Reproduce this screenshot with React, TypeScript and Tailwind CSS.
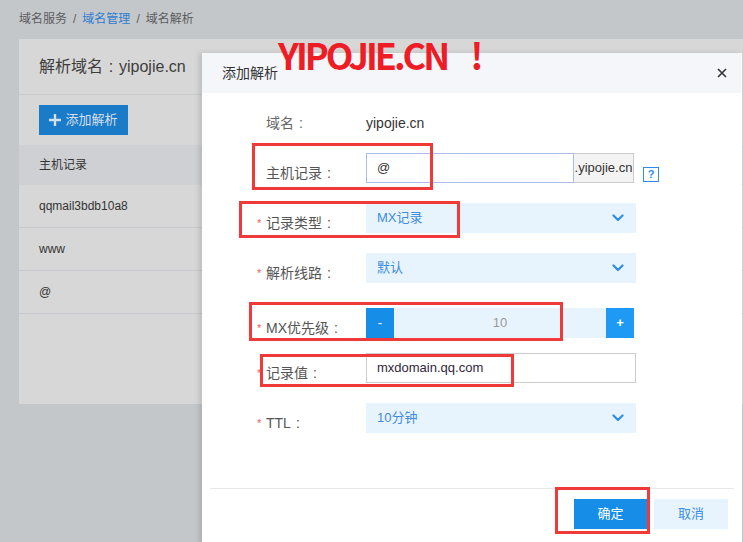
import type { ReactNode } from "react";

const font = "font-['Liberation_Sans','Noto_Sans_CJK_SC',sans-serif]";

function Chevron() {
  return (
    <svg width="12" height="8" viewBox="0 0 12 8" fill="none">
      <path d="M1.5 1.5 6 6l4.5-4.5" stroke="#2f8de4" strokeWidth="2.2" strokeLinecap="round" strokeLinejoin="round" />
    </svg>
  );
}

// full-width colon drawn centred in its box, as the reference font does
function Colon() {
  return <span className="inline-block w-[14px] text-center">:</span>;
}

function Label({ text, required = true }: { text: string; required?: boolean }) {
  return (
    <div className="flex w-[109px] shrink-0 items-center pt-[10px] text-[14px] text-[#555]">
      <span className="w-[9px] text-[11px] text-[#f25a5a]">{required ? "*" : ""}</span>
      <span>{text}</span>
      <Colon />
    </div>
  );
}

function Row({ children, className }: { children: ReactNode; className: string }) {
  return <div className={`flex h-[30px] items-center pl-[55px] ${className}`}>{children}</div>;
}

function Select({ value }: { value: string }) {
  return (
    <div className="flex h-[30px] w-[270px] items-center justify-between bg-[#e8f4fd] pl-[11px] pr-[12px] text-[13px] text-[#3f8cde]">
      <span>{value}</span>
      <Chevron />
    </div>
  );
}

function RedBox({ className }: { className: string }) {
  return <div className={`absolute border-[3px] border-[#f03a3a] ${className}`} />;
}

export default function App() {
  return (
    <div className={`relative h-[542px] w-[743px] overflow-hidden bg-[#c4c7ca] ${font}`}>
      {/* breadcrumb */}
      <div className="flex h-[39px] items-start gap-[6px] pl-[19px] pt-[10px] text-[12px] text-[#5a5c60]">
        <span>域名服务</span>
        <span>/</span>
        <span className="text-[#2f7cd0]">域名管理</span>
        <span>/</span>
        <span>域名解析</span>
      </div>

      {/* page panel under overlay */}
      <div className="ml-[19px] h-[365px] bg-[#d7d7d7]">
        <div className="flex h-[56px] items-center border-b border-[#c9cacc] pl-[20px] text-[16px] text-[#3d3d3d]">
          <span>解析域名</span>
          <span className="inline-block w-[16px] text-center">:</span>
          <span>yipojie.cn</span>
        </div>
        <div className="pl-[20px] pt-[10px]">
          <div className="flex h-[30px] w-[89px] items-center justify-center gap-[4px] bg-[#1a7bc9] text-[13px] text-[#d5dfe9]">
            <svg width="12" height="12" viewBox="0 0 12 12">
              <path d="M6 0v12M0 6h12" stroke="#d5dfe9" strokeWidth="2.4" />
            </svg>
            <span>添加解析</span>
          </div>
        </div>
        <div className="mt-[10px] flex h-[40px] items-center bg-[#cfd0d3] pl-[20px] text-[12px] text-[#333]">主机记录</div>
        {["qqmail3bdb10a8", "www", "@"].map((r) => (
          <div key={r} className="flex h-[43px] items-center border-b border-[#c8c9ce] pl-[20px] text-[12px] text-[#333]">
            {r}
          </div>
        ))}
      </div>

      {/* modal */}
      <div className="absolute left-[202px] top-[53px] h-[520px] w-[540px] bg-white shadow-[-3px_0_5px_rgba(0,0,0,0.12)]">
        <div className="flex h-[40px] items-center justify-between bg-[#f5f6fa] pl-[20px] pr-[15px] text-[14px] text-[#333]">
          <span>添加解析</span>
          <svg width="10" height="10" viewBox="0 0 10 10">
            <path d="M1 1l8 8M9 1 1 9" stroke="#333" strokeWidth="1.6" />
          </svg>
        </div>

        <Row className="mt-[15px]">
          <div className="flex w-[109px] shrink-0 text-[14px] text-[#666]">
            <span className="w-[9px]" />
            <span>域名</span>
            <Colon />
          </div>
          <span className="text-[14px] text-[#333]">yipojie.cn</span>
        </Row>

        <Row className="mt-[15px]">
          <Label text="主机记录" required={false} />
          <div className="flex h-[30px] w-[208px] items-center border border-[#a9bde6] pl-[10px] text-[13px] text-[#333]">@</div>
          <div className="flex h-[30px] w-[60px] items-center justify-center border border-l-0 border-[#cccccc] bg-[#f3f3f3] text-[13px] text-[#333]">
            .yipojie.cn
          </div>
          <div className="ml-[9px] mt-[12px] flex h-[15px] w-[16px] items-center justify-center border border-[#2d8cf0] text-[11px] font-bold text-[#2d8cf0]">
            ?
          </div>
        </Row>

        <Row className="mt-[20px]">
          <Label text="记录类型" />
          <Select value="MX记录" />
        </Row>

        <Row className="mt-[20px]">
          <Label text="解析线路" />
          <Select value="默认" />
        </Row>

        <Row className="mt-[25px]">
          <Label text="MX优先级" />
          <div className="flex h-[30px] w-[268px] bg-[#e8f4fd] text-[13px]">
            <div className="flex w-[28px] items-center justify-center bg-[#168ee8] text-white">-</div>
            <div className="flex flex-1 items-center justify-center text-[#999]">10</div>
            <div className="flex w-[28px] items-center justify-center bg-[#1e9af5] font-bold text-white">+</div>
          </div>
        </Row>

        <Row className="mt-[15px]">
          <Label text="记录值" />
          <div className="flex h-[30px] w-[270px] items-center border border-[#cccccc] pl-[10px] text-[13px] text-[#33263d]">
            mxdomain.qq.com
          </div>
        </Row>

        <Row className="mt-[20px]">
          <Label text="TTL" />
          <Select value="10分钟" />
        </Row>

        <div className="mx-[8px] mt-[55px] border-t border-[#e8e8e8]" />
        <div className="mt-[10px] flex justify-end gap-[7px] pr-[14px]">
          <div className="flex h-[30px] w-[73px] items-center justify-center bg-[#168ee8] text-[13px] text-white">确定</div>
          <div className="flex h-[30px] w-[74px] items-center justify-center bg-[#e8f4fd] text-[13px] text-[#3a8ee6]">取消</div>
        </div>
      </div>

      {/* watermark */}
      <div className="absolute left-[278px] top-[30px] flex font-['Noto_Sans_CJK_SC',sans-serif] text-[36px] font-bold leading-[48px] text-[#ee1c25]">
        <span className="tracking-[-3px]">YIPOJIE.CN</span>
        <span className="ml-[23px]">!</span>
      </div>

      {/* annotation boxes */}
      <RedBox className="left-[252px] top-[143px] h-[47px] w-[181px]" />
      <RedBox className="left-[239px] top-[201px] h-[37px] w-[221px]" />
      <RedBox className="left-[249px] top-[302px] h-[39px] w-[314px]" />
      <RedBox className="left-[260px] top-[354px] h-[33px] w-[254px]" />
      <RedBox className="left-[555px] top-[487px] h-[47px] w-[95px]" />
    </div>
  );
}
